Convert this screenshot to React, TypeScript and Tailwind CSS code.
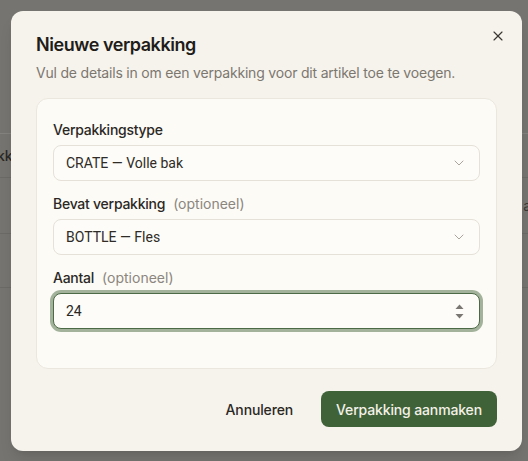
import React from 'react';
import { X, ChevronDown } from 'lucide-react';

const font = { fontFamily: 'Inter, "Noto Sans", sans-serif' };
const valueFont = { fontFamily: 'Roboto, "Noto Sans", sans-serif' };

const Label: React.FC<{ text: string; optional?: boolean }> = ({ text, optional }) => (
  <div className="flex items-center gap-2 h-5 text-[14px] leading-5 font-medium tracking-[-0.018em] text-[#2b2824]">
    <span>{text}</span>
    {optional && <span className="font-normal tracking-normal text-[#8b867e]">(optioneel)</span>}
  </div>
);

const Select: React.FC<{ value: string }> = ({ value }) => (
  <div className="flex items-center justify-between h-9 pl-3 pr-3 rounded-lg border border-[#e5e1d8] bg-[#fdfcf8] text-[14px] text-[#2f2b26]">
    <span style={valueFont}>{value}</span>
    <ChevronDown size={16} strokeWidth={1.5} className="text-[#aaa49b]" />
  </div>
);

export default function App() {
  return (
    <div style={font} className="relative w-full h-[461px] overflow-hidden bg-[#767470]">
      {/* page behind the overlay */}
      <div className="pt-[133px] text-[14px] text-[#2a2824]">
        <div className="h-[44px] border-t border-[#84827e] flex items-center">
          <span className="-ml-[3px] font-medium">kk</span>
        </div>
        <div className="h-[56px] border-t border-[#6c6a66] flex items-center justify-end">
          <span className="-mr-[3px] text-[#3a3834]">a</span>
        </div>
        <div className="h-[54px] border-t border-[#6c6a66]" />
        <div className="border-t border-[#6c6a66]" />
      </div>

      <div className="absolute left-[11px] top-[11px] w-[511px] rounded-xl bg-[#f6f3ed] shadow-lg px-[25px] pt-[22px] pb-6">
        <button className="absolute right-4 top-[17px] text-[#3a3631]">
          <X size={16} strokeWidth={1.75} />
        </button>

        <h2 className="text-[18px] leading-6 font-semibold tracking-[-0.025em] text-[#1f1c19]">Nieuwe verpakking</h2>
        <p className="mt-[6px] text-[14px] leading-5 tracking-[-0.014em] text-[#7c776f]">
          Vul de details in om een verpakking voor dit artikel toe te voegen.
        </p>

        <div className="mt-[15px] rounded-xl border border-[#ebe7de] bg-[#fcfbf6] px-4 pt-[21px] pb-[39px] flex flex-col gap-[13px]">
          <div className="flex flex-col gap-[5px]">
            <Label text="Verpakkingstype" />
            <Select value="CRATE — Volle bak" />
          </div>
          <div className="flex flex-col gap-[5px]">
            <Label text="Bevat verpakking" optional />
            <Select value="BOTTLE — Fles" />
          </div>
          <div className="flex flex-col gap-[5px]">
            <Label text="Aantal" optional />
            <div className="relative">
              <input
                type="text"
                defaultValue="24"
                style={valueFont}
                className="w-full h-9 px-3 rounded-lg border border-[#4d6a46] bg-[#fdfcf8] text-[14px] text-[#2a2723] outline-none ring-[3px] ring-[#a3b29a]"
              />
              <svg className="absolute right-[16px] top-[11px]" width="9" height="15" viewBox="0 0 9 15">
                <path d="M4.5 0.5 L8.5 5 H0.5 Z" fill="#7a7671" />
                <path d="M4.5 14.5 L8.5 10 H0.5 Z" fill="#7a7671" />
              </svg>
            </div>
          </div>
        </div>

        <div className="mt-[22px] flex justify-end items-center gap-3">
          <button className="h-9 px-4 rounded-lg text-[14px] font-medium tracking-[-0.01em] text-[#2b2824]">Annuleren</button>
          <button className="h-9 px-[15px] rounded-lg bg-[#3f6238] text-[14px] font-medium tracking-[-0.01em] text-[#f4f1e8]">
            Verpakking aanmaken
          </button>
        </div>
      </div>
    </div>
  );
}
